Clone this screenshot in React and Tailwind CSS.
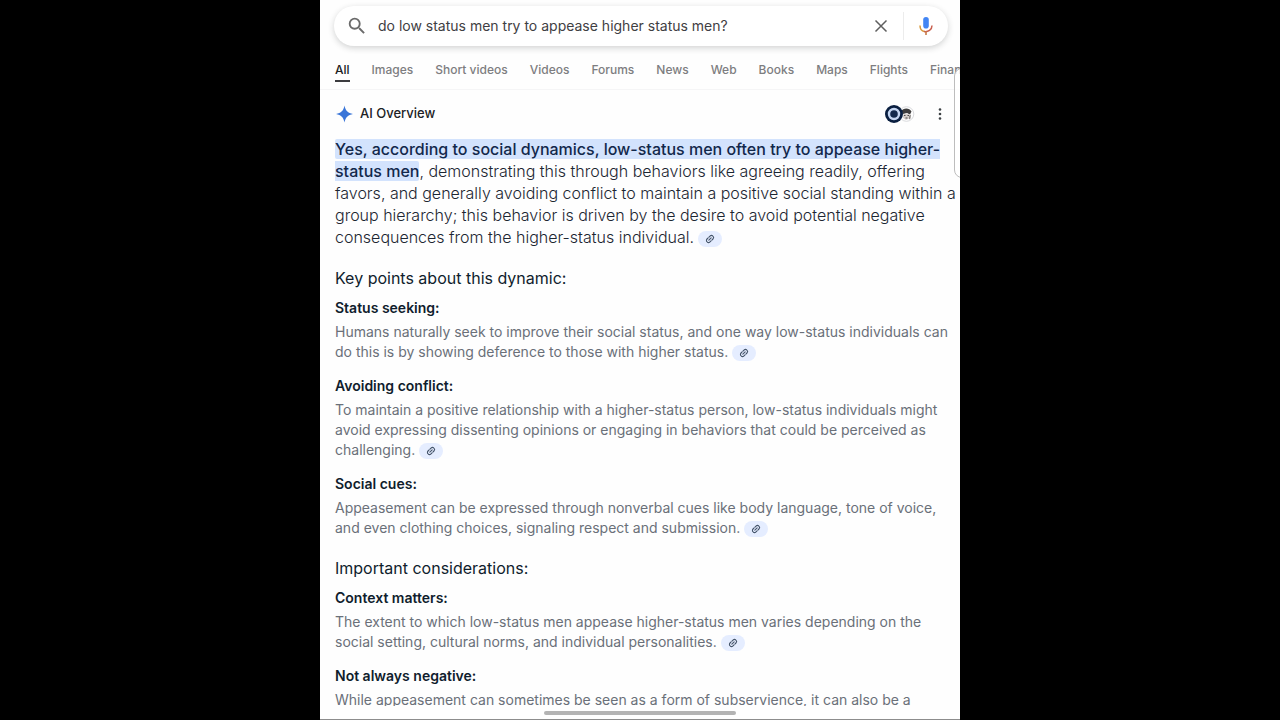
import React from "react";

const tabs = ["Images", "Short videos", "Videos", "Forums", "News", "Web", "Books", "Maps", "Flights", "Finance"];

function CiteButton() {
  return (
    <button type="button" aria-label="View related links" className="inline-flex h-4 w-6 items-center justify-center rounded-full bg-[#e5edff] align-middle text-[#44546a]">
      <svg viewBox="0 0 24 24" className="size-2.5 -rotate-45" fill="none" stroke="currentColor" strokeWidth="2.6" strokeLinecap="round" aria-hidden="true">
        <path d="M10.500 7H7a5 5 0 0 0 0 10h3.500M13.500 7H17a5 5 0 0 1 0 10h-3.500M8 12h8" />
      </svg>
    </button>
  );
}

function Lines({ lines, cite }) {
  return lines.map((line, i) => (
    <React.Fragment key={line}>
      {line}
      {i < lines.length - 1 ? <br /> : cite && <> <CiteButton /></>}
    </React.Fragment>
  ));
}

function Point({ title, lines, cite = true }) {
  return (
    <li className="mb-3">
      <h3 className="text-sm leading-6 font-semibold text-[#101d2d]">{title}</h3>
      <p className="mt-0.5 text-sm leading-5 whitespace-nowrap text-[#6a7079]">
        <Lines lines={lines} cite={cite} />
      </p>
    </li>
  );
}

function SectionTitle({ children }) {
  return <h2 className="mt-[18px] mb-1.5 text-base leading-6 text-[#101d2d]">{children}</h2>;
}

export default function App() {
  return (
    <div className="flex h-screen justify-center bg-black font-['Inter','Liberation_Sans',sans-serif]">
      <div className="relative flex w-full max-w-[640px] flex-col overflow-hidden border-b border-[#8c8c8c] bg-[#fefefe]">
        <header className="shrink-0 border-b border-[#f5f5f6] pt-1.5">
          <form role="search" onSubmit={(e) => e.preventDefault()} className="mr-3 ml-3.5 flex h-10 items-center rounded-full bg-white shadow-[0_2px_6px_rgba(32,33,36,0.2)]">
            <button type="submit" aria-label="Search" className="ml-3 text-[#6b6b6b]">
              <svg viewBox="0 0 24 24" className="size-[22px]" fill="currentColor" aria-hidden="true">
                <path d="M15.500 14h-.79l-.28-.27A6.470 6.470 0 0 0 16 9.500 6.500 6.500 0 1 0 9.500 16c1.610 0 3.090-.59 4.230-1.570l.27.28v.79l5 4.990L20.490 19l-4.990-5zm-6 0C7.010 14 5 11.990 5 9.500S7.010 5 9.500 5 14 7.010 14 9.500 11.990 14 9.500 14z" />
              </svg>
            </button>
            <input aria-label="Search query" defaultValue="do low status men try to appease higher status men?" className="ml-2.5 min-w-0 flex-1 bg-transparent text-sm text-[#3f4043] outline-none" />
            <button type="button" aria-label="Clear" className="mr-3 text-[#5f5f5f]">
              <svg viewBox="0 0 20 20" className="size-5" stroke="currentColor" strokeWidth="1.5" aria-hidden="true">
                <path d="M4.500 4.500l11 11M15.500 4.500l-11 11" />
              </svg>
            </button>
            <span className="h-7 w-px bg-[#ececec]" />
            <button type="button" aria-label="Search by voice" className="mr-3 ml-3">
              <svg viewBox="0 0 20 20" className="size-5" fill="none" aria-hidden="true">
                <rect x="7.200" y="1" width="5.600" height="11.500" rx="2.800" fill="#4285f4" />
                <path d="M4 9.500c0 3.200 2 5.600 4.500 6.100" stroke="#d99a3c" strokeWidth="1.500" />
                <path d="M8 15.500c4 .7 8-1.500 8-6" stroke="#c9604f" strokeWidth="1.500" />
                <path d="M10 15.500V19" stroke="#c77a45" strokeWidth="1.600" />
              </svg>
            </button>
          </form>
          <nav aria-label="Search categories" className="mt-3.5 flex h-[29px] items-start gap-[22px] overflow-hidden pl-[15px] text-xs leading-5 font-medium whitespace-nowrap text-[#7d7d80]">
            <a href="#all" aria-current="page" className="border-b-2 border-[#3c3c3f] text-[#202124]">All</a>
            {tabs.map((t) => (
              <a key={t} href={"#" + t.toLowerCase().replace(" ", "-")}>{t}</a>
            ))}
          </nav>
        </header>

        <main className="min-h-0 flex-1 overflow-hidden pr-3 pl-[15px]">
          <div className="mt-3 flex h-6 items-center">
            <svg viewBox="0 0 20 20" className="size-5" aria-hidden="true">
              <path d="M9.500 1.500C10.400 6.600 12.900 9.100 18 10 12.900 10.900 10.400 13.400 9.500 18.500 8.600 13.400 6.100 10.900 1 10 6.100 9.100 8.600 6.600 9.500 1.500Z" fill="#3975d8" />
            </svg>
            <h1 className="ml-[5px] flex-1 text-[13px] font-medium text-[#202124]">AI Overview</h1>
            <button type="button" aria-label="Sources" className="mr-4">
              <svg viewBox="0 0 32 20" className="h-5 w-8" aria-hidden="true">
                <circle cx="22.500" cy="10" r="7.300" fill="#fff" stroke="#d9dadd" />
                <path d="M17.500 7c1-3 8-4 10 .500l-1.500 3-3-1.500-4 1z" fill="#3e3d3d" />
                <path d="M19 10.500l3-1 4 1-1 4-3 1.500-3-2z" fill="#d7d0cb" />
                <path d="M20 11.500h1.500M23.500 11.500H25M21.500 14h2" stroke="#4c4a49" />
                <path d="M25 12l2-1.500-.5 4-1.500 1z" fill="#8a8582" />
                <circle cx="10" cy="10" r="9" fill="#0a1f40" />
                <circle cx="10" cy="10" r="5" fill="#13294d" stroke="#c5d6f2" strokeWidth="2.400" />
              </svg>
            </button>
            <button type="button" aria-label="More options" className="text-[#3c4043]">
              <svg viewBox="0 0 16 16" className="size-4" fill="currentColor" aria-hidden="true">
                <circle cx="8" cy="3.500" r="1.300" />
                <circle cx="8" cy="8" r="1.300" />
                <circle cx="8" cy="12.500" r="1.300" />
              </svg>
            </button>
          </div>

          <p className="mt-3 text-base leading-[22px] font-light whitespace-nowrap text-[#1c2632]">
            <mark className="rounded-xs bg-[#d3e3fd] font-medium text-[#12284b]">
              Yes, according to social dynamics, low-status men often try to appease higher-<br />status men
            </mark>
            <Lines
              cite
              lines={[
                ", demonstrating this through behaviors like agreeing readily, offering",
                "favors, and generally avoiding conflict to maintain a positive social standing within a",
                "group hierarchy; this behavior is driven by the desire to avoid potential negative",
                "consequences from the higher-status individual.",
              ]}
            />
          </p>

          <SectionTitle>Key points about this dynamic:</SectionTitle>
          <ul>
            <Point title="Status seeking:" lines={["Humans naturally seek to improve their social status, and one way low-status individuals can", "do this is by showing deference to those with higher status."]} />
            <Point title="Avoiding conflict:" lines={["To maintain a positive relationship with a higher-status person, low-status individuals might", "avoid expressing dissenting opinions or engaging in behaviors that could be perceived as", "challenging."]} />
            <Point title="Social cues:" lines={["Appeasement can be expressed through nonverbal cues like body language, tone of voice,", "and even clothing choices, signaling respect and submission."]} />
          </ul>
          <SectionTitle>Important considerations:</SectionTitle>
          <ul>
            <Point title="Context matters:" lines={["The extent to which low-status men appease higher-status men varies depending on the", "social setting, cultural norms, and individual personalities."]} />
            <Point title="Not always negative:" cite={false} lines={["While appeasement can sometimes be seen as a form of subservience, it can also be a"]} />
          </ul>
        </main>

        <div className="flex h-[13px] shrink-0 items-center justify-center" aria-hidden="true">
          <div className="h-1 w-48 rounded-full bg-[#b3b3b3]" />
        </div>
        <div className="absolute top-[68px] -right-3 h-[110px] w-[18px] rounded-lg border border-[#bdbdbd] bg-white/80" aria-hidden="true" />
      </div>
    </div>
  );
}
